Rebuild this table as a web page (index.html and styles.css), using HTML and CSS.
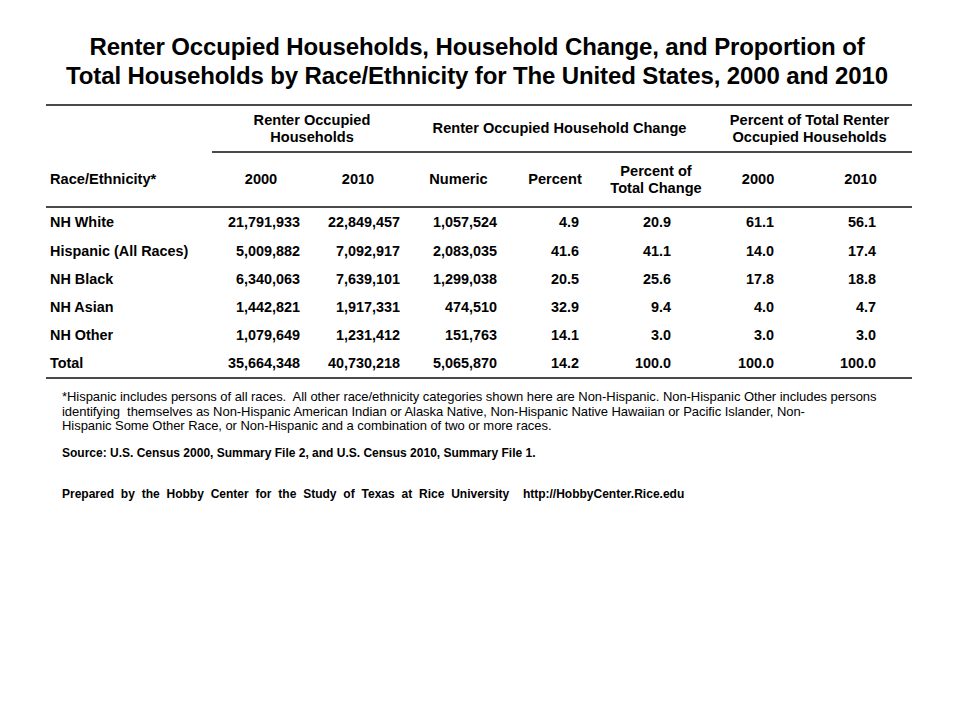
FILE: index.html
```html
<!DOCTYPE html>
<html>
<head>
<meta charset="utf-8">
<link rel="stylesheet" href="styles.css">
</head>
<body>
<div class="page">
  <h1 class="title">Renter Occupied Households, Household Change, and Proportion of<br>Total Households by Race/Ethnicity for The United States, 2000 and 2010</h1>
  <table class="data">
    <colgroup>
      <col class="c0"><col class="c1"><col class="c2"><col class="c3"><col class="c4"><col class="c5"><col class="c6"><col class="c7">
    </colgroup>
    <thead>
      <tr class="group-row">
        <th class="blank" rowspan="2"><span class="rh">Race/Ethnicity*</span></th>
        <th colspan="2" class="grp">Renter Occupied<br>Households</th>
        <th colspan="3" class="grp">Renter Occupied Household Change</th>
        <th colspan="2" class="grp">Percent of Total Renter<br>Occupied Households</th>
      </tr>
      <tr class="col-row">
        <th class="h1">2000</th>
        <th class="h2">2010</th>
        <th class="h3">Numeric</th>
        <th class="h4">Percent</th>
        <th class="h5">Percent of<br>Total Change</th>
        <th class="h6">2000</th>
        <th class="h7">2010</th>
      </tr>
    </thead>
    <tbody>
      <tr><td class="name">NH White</td><td class="n1">21,791,933</td><td class="n2">22,849,457</td><td class="n3">1,057,524</td><td class="n4">4.9</td><td class="n5">20.9</td><td class="n6">61.1</td><td class="n7">56.1</td></tr>
      <tr><td class="name">Hispanic (All Races)</td><td class="n1">5,009,882</td><td class="n2">7,092,917</td><td class="n3">2,083,035</td><td class="n4">41.6</td><td class="n5">41.1</td><td class="n6">14.0</td><td class="n7">17.4</td></tr>
      <tr><td class="name">NH Black</td><td class="n1">6,340,063</td><td class="n2">7,639,101</td><td class="n3">1,299,038</td><td class="n4">20.5</td><td class="n5">25.6</td><td class="n6">17.8</td><td class="n7">18.8</td></tr>
      <tr><td class="name">NH Asian</td><td class="n1">1,442,821</td><td class="n2">1,917,331</td><td class="n3">474,510</td><td class="n4">32.9</td><td class="n5">9.4</td><td class="n6">4.0</td><td class="n7">4.7</td></tr>
      <tr><td class="name">NH Other</td><td class="n1">1,079,649</td><td class="n2">1,231,412</td><td class="n3">151,763</td><td class="n4">14.1</td><td class="n5">3.0</td><td class="n6">3.0</td><td class="n7">3.0</td></tr>
      <tr class="total"><td class="name">Total</td><td class="n1">35,664,348</td><td class="n2">40,730,218</td><td class="n3">5,065,870</td><td class="n4">14.2</td><td class="n5">100.0</td><td class="n6">100.0</td><td class="n7">100.0</td></tr>
    </tbody>
  </table>
  <div class="notes">
    <p class="foot">*Hispanic includes persons of all races.&nbsp; All other race/ethnicity categories shown here are Non-Hispanic. Non-Hispanic Other includes persons<br>identifying&nbsp; themselves as Non-Hispanic American Indian or Alaska Native, Non-Hispanic Native Hawaiian or Pacific Islander, Non-<br>Hispanic Some Other Race, or Non-Hispanic and a combination of two or more races.</p>
    <p class="source">Source: U.S. Census 2000, Summary File 2, and U.S. Census 2010, Summary File 1.</p>
    <p class="prepared">Prepared by the Hobby Center for the Study of Texas at Rice University&nbsp; http://HobbyCenter.Rice.edu</p>
  </div>
</div>
</body>
</html>
```
FILE: styles.css
```css
html, body {
  margin: 0;
  padding: 0;
  background: #ffffff;
}

.page {
  width: 960px;
  height: 720px;
  font-family: "Liberation Sans", Arial, sans-serif;
  color: #000;
}

.title {
  margin: 0;
  padding-top: 32px;
  padding-right: 6px;
  font-size: 24px;
  line-height: 29px;
  font-weight: bold;
  text-align: center;
  letter-spacing: -0.12px;
}

.data {
  margin: 14px 0 0 46px;
  width: 866px;
  border-collapse: collapse;
  table-layout: fixed;
  font-size: 14.4px;
  font-weight: bold;
}

.c0 { width: 166px; }
.c1 { width: 100px; }
.c2 { width: 100px; }
.c3 { width: 93px; }
.c4 { width: 100px; }
.c5 { width: 102px; }
.c6 { width: 102px; }
.c7 { width: 103px; }

.data th {
  font-weight: bold;
  padding: 0;
  line-height: 17px;
  font-size: 14.6px;
}

.group-row th {
  border-top: 2px solid #4a4a4a;
  height: 45px;
  vertical-align: middle;
}

.group-row th.grp {
  border-bottom: 2px solid #4a4a4a;
}

.blank {
  border-bottom: 2px solid #4a4a4a;
  text-align: left;
  vertical-align: bottom !important;
}

.blank .rh {
  display: block;
  padding: 0 0 18px 4px;
}

.col-row th {
  height: 53px;
  border-bottom: 2px solid #4a4a4a;
  vertical-align: middle;
  text-align: center;
}

.col-row .h1 { padding-right: 2px; }
.col-row .h2 { padding-left: 0; padding-right: 8px; }
.col-row .h3 { padding-left: 0; }

.data td {
  height: 28px;
  padding: 0;
  text-align: right;
  vertical-align: middle;
  line-height: 17px;
}

.data td.name {
  text-align: left;
  padding-left: 4px;
}

.data tbody tr:first-child td { height: 29px; }

.data tr.total td {
  height: 28px;
  border-bottom: 2px solid #4a4a4a;
}

.n1 { padding-right: 12px !important; }
.n2 { padding-right: 12px !important; }
.n3 { padding-right: 8px !important; }
.n4 { padding-right: 26px !important; }
.n5 { padding-right: 36px !important; }
.n6 { padding-right: 35px !important; }
.n7 { padding-right: 36px !important; }

.notes {
  padding-left: 62px;
  margin-top: 11px;
}

.notes p {
  margin: 0;
}

.foot {
  font-size: 13px;
  line-height: 14.5px;
  letter-spacing: -0.05px;
}

.source {
  margin-top: 12px !important;
  font-size: 12px;
  line-height: 14px;
  font-weight: bold;
}

.prepared {
  margin-top: 27px !important;
  font-size: 12px;
  line-height: 14px;
  font-weight: bold;
  word-spacing: 3.5px;
}
```
